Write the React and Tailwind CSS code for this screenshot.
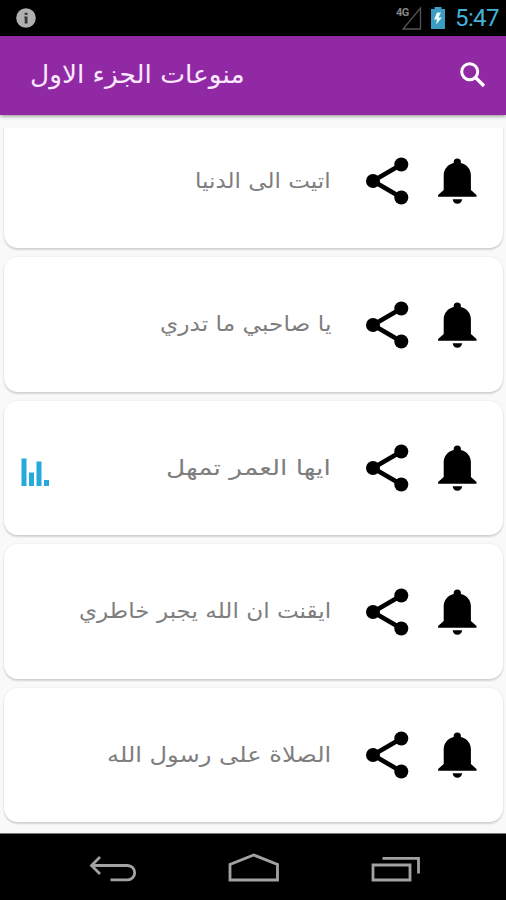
import React from "react";

const rows = [
  { text: "اتيت الى الدنيا", width: 136 },
  { text: "يا صاحبي ما تدري", width: 171 },
  { text: "ايها العمر تمهل", width: 165, playing: true },
  { text: "ايقنت ان الله يجبر خاطري", width: 252 },
  { text: "الصلاة على رسول الله", width: 224 },
];

// Arabic label stretched horizontally to an exact width, anchored on its right edge.
function FitText({ text, width, className }) {
  const ref = React.useRef(null);
  const [scale, setScale] = React.useState(1);
  React.useLayoutEffect(() => {
    setScale(width / ref.current.offsetWidth);
  }, [text, width]);
  return (
    <div dir="rtl" className="overflow-visible whitespace-nowrap" style={{ width }}>
      <span ref={ref} className={"inline-block origin-right " + className} style={{ transform: `scaleX(${scale})` }}>
        {text}
      </span>
    </div>
  );
}

function Bell() {
  return (
    <svg width="40" height="48" viewBox="0 0 40 48">
      <path d="M16.7 5.900V5a3.600 3.600 0 0 1 7.200 0v.900C30.300 7.600 33.900 12.400 33.900 18.400v14.500L39.500 38v1.700H1.100V38l5.600-5.100V18.400c0-6 3.600-10.800 10-12.500Z" />
      <path d="M15.700 42.200h9.400c-.3 2.800-2 4.600-4.700 4.600s-4.400-1.800-4.700-4.600Z" />
    </svg>
  );
}

function Share() {
  return (
    <svg width="44" height="48" viewBox="0 0 44 48">
      <path d="M36.300 7.500 8 24l28.300 16.500" fill="none" stroke="#000" strokeWidth="4.600" />
      <circle cx="36.300" cy="7.500" r="7" />
      <circle cx="8" cy="24" r="7" />
      <circle cx="36.300" cy="40.500" r="7" />
    </svg>
  );
}

function Card({ row }) {
  return (
    <div className="flex h-[134.500px] shrink-0 items-center rounded-[14px] bg-white pr-[26px] shadow-[0_2px_2px_rgba(0,0,0,0.14),0_0_3px_rgba(0,0,0,0.07)]">
      <div className="w-[60px] pl-[17px] pt-2">
        {row.playing && (
          <svg width="29" height="30" viewBox="0 0 29 30" fill="#27a9dc">
            <path d="M.5 1.500h5V29h-5zM8 15.500h5V29H8zM15.500 4.500h5V29h-5zM23 23h5v6h-5z" />
          </svg>
        )}
      </div>
      <div className="flex flex-1 justify-end">
        <FitText text={row.text} width={row.width} className="font-['DejaVu_Sans'] text-[21px] leading-[30px] text-[#7e7e7e]" />
      </div>
      <div className="ml-[34px] mt-[0.500px] flex items-center gap-[28px]">
        <Share />
        <Bell />
      </div>
    </div>
  );
}

export default function App() {
  return (
    <div className="flex h-[900px] w-[506px] flex-col overflow-hidden bg-[#f9f9f9]">
      <div className="flex h-[36px] shrink-0 items-center bg-black pl-4 pr-2">
        <svg width="20" height="20" viewBox="0 0 20 20">
          <circle cx="10" cy="10" r="9.800" fill="#b0b0b0" />
          <path d="M8.700 4.700h2.800v2.400H8.700zM8.300 8.500h3.200v7H8.700v-5.600h-.4z" fill="#353535" />
        </svg>
        <div className="flex-1" />
        <div className="mr-[-8px] w-[14px] self-start whitespace-nowrap pt-[6px] font-[Roboto] text-[11px] font-bold leading-[13px] tracking-[-0.500px] text-[#858585]">4G</div>
        <svg className="mr-[8px]" width="20" height="24" viewBox="0 0 20 24">
          <path d="M18.500 2v21H1Z" fill="none" stroke="#555" strokeWidth="1.300" />
        </svg>
        <svg className="mr-[9px]" width="16" height="24" viewBox="0 0 16 24">
          <path d="M4.500 1h7v2H15v20H1V3h3.500Z" fill="#3b9dc1" />
          <path d="m7 6.500-3 7h3l-1 5 6-7H8.500l2.500-5Z" fill="#eefaff" />
        </svg>
        <div className="w-[43px] whitespace-nowrap font-[Roboto] text-[24px] leading-[37px] tracking-[-0.600px] text-[#43b2da]">5:47</div>
      </div>
      <header className="z-10 flex h-[78.500px] shrink-0 items-center justify-between bg-[#9229a4] pl-[30px] pr-[20px] shadow-[0_1px_4px_rgba(0,0,0,0.45)]">
        <FitText text="منوعات الجزء الاول" width={215} className="font-['DejaVu_Sans'] text-[25px] leading-[36px] text-[#fbe9ff]" />
        <svg className="mt-[-1px]" width="26" height="26" viewBox="0 0 26 26" fill="none" stroke="#fff">
          <circle cx="9.700" cy="9.700" r="8" strokeWidth="3" />
          <path d="m15.500 15.500 8.500 8.500" strokeWidth="3.400" />
        </svg>
      </header>
      <main className="mt-[13px] flex h-[705.500px] shrink-0 flex-col justify-end gap-[9px] overflow-hidden pb-[11px] pl-[4px] pr-[3px]">
        {rows.map((row) => (
          <Card key={row.text} row={row} />
        ))}
      </main>
      <nav className="flex h-[67px] shrink-0 items-start border-t border-[#777] bg-black pl-[89px] pt-[19px]">
        <svg width="49" height="31" viewBox="0 0 49 31" fill="none" stroke="#a2a2a2" strokeWidth="2.800">
          <path d="m11 4-8.500 8.500L11 21M3 12.500h35.500a7.200 7.200 0 0 1 0 14.400H21.500" />
        </svg>
        <svg className="ml-[89px]" width="54" height="31" viewBox="0 0 54 31" fill="none" stroke="#a2a2a2" strokeWidth="2.800">
          <path d="M3 27V11.500L26.700 2 50.500 11.500V27Z" />
        </svg>
        <svg className="ml-[89px]" width="52" height="31" viewBox="0 0 52 31" fill="none" stroke="#a2a2a2" strokeWidth="2.800">
          <path d="M3 12h37v15H3ZM12.500 5.300H48.500V20.500" />
        </svg>
      </nav>
    </div>
  );
}
